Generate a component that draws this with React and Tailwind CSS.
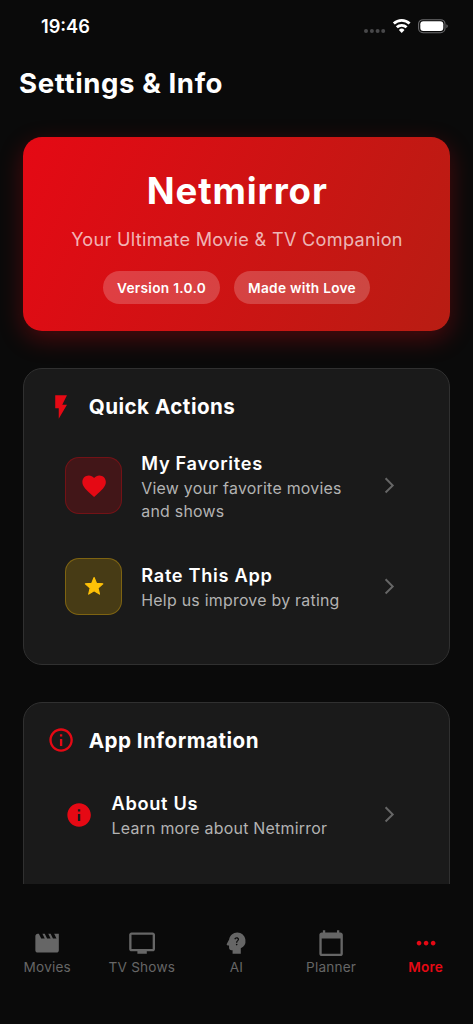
import { MdFlashOn, MdFavorite, MdInfo, MdInfoOutline, MdArrowForwardIos, MdMovie, MdTv, MdPsychologyAlt, MdCalendarToday, MdMoreHoriz } from "react-icons/md";

function StatusBar() {
  return (
    <div className="flex h-[53px] shrink-0 items-center justify-between pl-[41px] pr-[24px]">
      <span className="text-[18.2px] font-[560] leading-none">19:46</span>
      <svg width="85" height="18" viewBox="0 0 85 18" className="block">
        <g fill="#48484a">
          <circle cx="2" cy="13" r="2" />
          <circle cx="7.9" cy="13" r="2" />
          <circle cx="13.6" cy="13" r="2" />
          <circle cx="19.2" cy="13" r="2" />
        </g>
        <g fill="none" stroke="#fff" strokeWidth="2.8">
          <path d="M29.8 5.6a11.5 11.5 0 0 1 15.8 0" />
          <path d="M32.8 9.3a7.1 7.1 0 0 1 9.8 0" />
        </g>
        <path d="M34.9 11.9a4 4 0 0 1 5.6 0l-2.8 3z" fill="#fff" />
        <rect x="54.6" y="1.7" width="26.4" height="13" rx="4.4" fill="none" stroke="#6c6c6e" strokeWidth="1.1" />
        <rect x="56.3" y="3.3" width="23" height="9.8" rx="3" fill="#fff" />
        <path d="M82.4 6.3c1.8.7 1.8 3.2 0 3.9z" fill="#6c6c6e" />
      </svg>
    </div>
  );
}

function Chip({ children }) {
  return (
    <span className="flex h-[33px] items-center whitespace-nowrap rounded-full bg-white/20 px-[14px] pt-[1px] text-[13.7px] font-semibold tracking-[0.28px]">
      {children}
    </span>
  );
}

function SectionTitle({ icon, children }) {
  return (
    <div className="flex h-[28px] items-center gap-[13.7px]">
      {icon}
      <h2 className="whitespace-nowrap pt-[1px] text-[20.6px] font-[650] tracking-[0.48px]">{children}</h2>
    </div>
  );
}

function Row({ icon, title, children }) {
  return (
    <div className="flex items-center">
      {icon}
      <div className="flex-1 pt-[2.5px]">
        <h3 className="mb-[2px] whitespace-nowrap text-[18.2px] font-[570] leading-[24px] tracking-[0.69px]">{title}</h3>
        <p className="whitespace-nowrap text-[15.9px] leading-[23px] tracking-[0.25px] text-[#b3b3b3]">{children}</p>
      </div>
      <MdArrowForwardIos className="size-[18.8px] text-[#666]" />
    </div>
  );
}

function Star() {
  return (
    <svg width="28.2" height="28.2" viewBox="0 0 24 24" fill="#ffc107" stroke="#ffc107" strokeWidth="1" strokeLinejoin="round">
      <path d="M12 4.7 14.06 9.67 19.42 10.09 15.33 13.58 16.58 18.81 12 16 7.42 18.81 8.67 13.58 4.58 10.09 9.94 9.67Z" />
    </svg>
  );
}

const tabs = [
  { label: "Movies", Icon: MdMovie },
  { label: "TV Shows", Icon: MdTv },
  { label: "AI", Icon: MdPsychologyAlt },
  { label: "Planner", Icon: MdCalendarToday },
  { label: "More", Icon: MdMoreHoriz, active: true },
];

export default function App() {
  return (
    <div className="flex h-screen flex-col overflow-hidden bg-[#0a0a0a] font-['Inter',sans-serif] text-white">
      <StatusBar />
      <header className="flex h-[61px] shrink-0 items-center pl-[19px]">
        <h1 className="whitespace-nowrap text-[27.6px] font-bold leading-none tracking-[0.6px]">Settings &amp; Info</h1>
      </header>

      <main className="flex h-[770px] shrink-0 flex-col gap-[37px] overflow-hidden px-[23.3px] pt-[23.4px]">
        <section className="flex h-[194px] shrink-0 flex-col items-center rounded-[19px] bg-[linear-gradient(114.4deg,#e50914,#b81d13)] pt-[28.8px] shadow-[0_8px_25px_rgba(229,9,20,0.3)]">
          <h2 className="pl-[1.5px] text-[36.6px] font-bold leading-[50px] tracking-[0.9px]">Netmirror</h2>
          <p className="mt-[10px] whitespace-nowrap pl-[1px] text-[18.1px] leading-[27px] tracking-[0.31px] text-white/70">Your Ultimate Movie &amp; TV Companion</p>
          <div className="mt-[18px] flex gap-[14px]">
            <Chip>Version 1.0.0</Chip>
            <Chip>Made with Love</Chip>
          </div>
        </section>

        <section className="h-[296.7px] shrink-0 rounded-[19px] border border-[#303030] bg-[#1a1a1a] pl-[22.5px] pt-[23.5px]">
          <SectionTitle icon={<MdFlashOn className="size-[28.2px] text-[#e50914]" />}>Quick Actions</SectionTitle>
          <div className="mt-[27.6px] flex flex-col gap-[34.75px] pl-[18.5px] pr-[50px]">
            <Row
              title="My Favorites"
              icon={
                <div className="mr-[19px] flex size-[57px] shrink-0 items-center justify-center rounded-[14px] border border-[#e50914]/30 bg-[#e50914]/20">
                  <MdFavorite className="size-[28.2px] text-[#e50914]" />
                </div>
              }
            >
              View your favorite movies<br />and shows
            </Row>
            <Row
              title="Rate This App"
              icon={
                <div className="mr-[19px] flex size-[57px] shrink-0 items-center justify-center rounded-[14px] border border-[#ffc107]/30 bg-[#ffc107]/20">
                  <Star />
                </div>
              }
            >
              Help us improve by rating
            </Row>
          </div>
        </section>

        <section className="h-[300px] shrink-0 rounded-[19px] border border-[#303030] bg-[#1a1a1a] pl-[22.5px] pt-[23.5px]">
          <SectionTitle icon={<MdInfoOutline className="size-[28.2px] text-[#e50914]" />}>App Information</SectionTitle>
          <div className="mt-[34.3px] pl-[18px] pr-[50px]">
            <Row title="About Us" icon={<MdInfo className="mr-[18.5px] size-[28.2px] text-[#e50914]" />}>
              Learn more about Netmirror
            </Row>
          </div>
        </section>
      </main>

      <nav className="flex h-[140px] shrink-0 pt-[45px]">
        {tabs.map(({ label, Icon, active }) => (
          <div key={label} className={active ? "flex flex-1 flex-col items-center text-[#e50914]" : "flex flex-1 flex-col items-center text-[#666]"}>
            <Icon className="size-[28.2px]" />
            <span className={active ? "whitespace-nowrap text-[13.6px] font-semibold leading-[20px] tracking-[0.2px]" : "whitespace-nowrap text-[13.6px] leading-[20px] tracking-[0.2px]"}>{label}</span>
          </div>
        ))}
      </nav>
    </div>
  );
}
